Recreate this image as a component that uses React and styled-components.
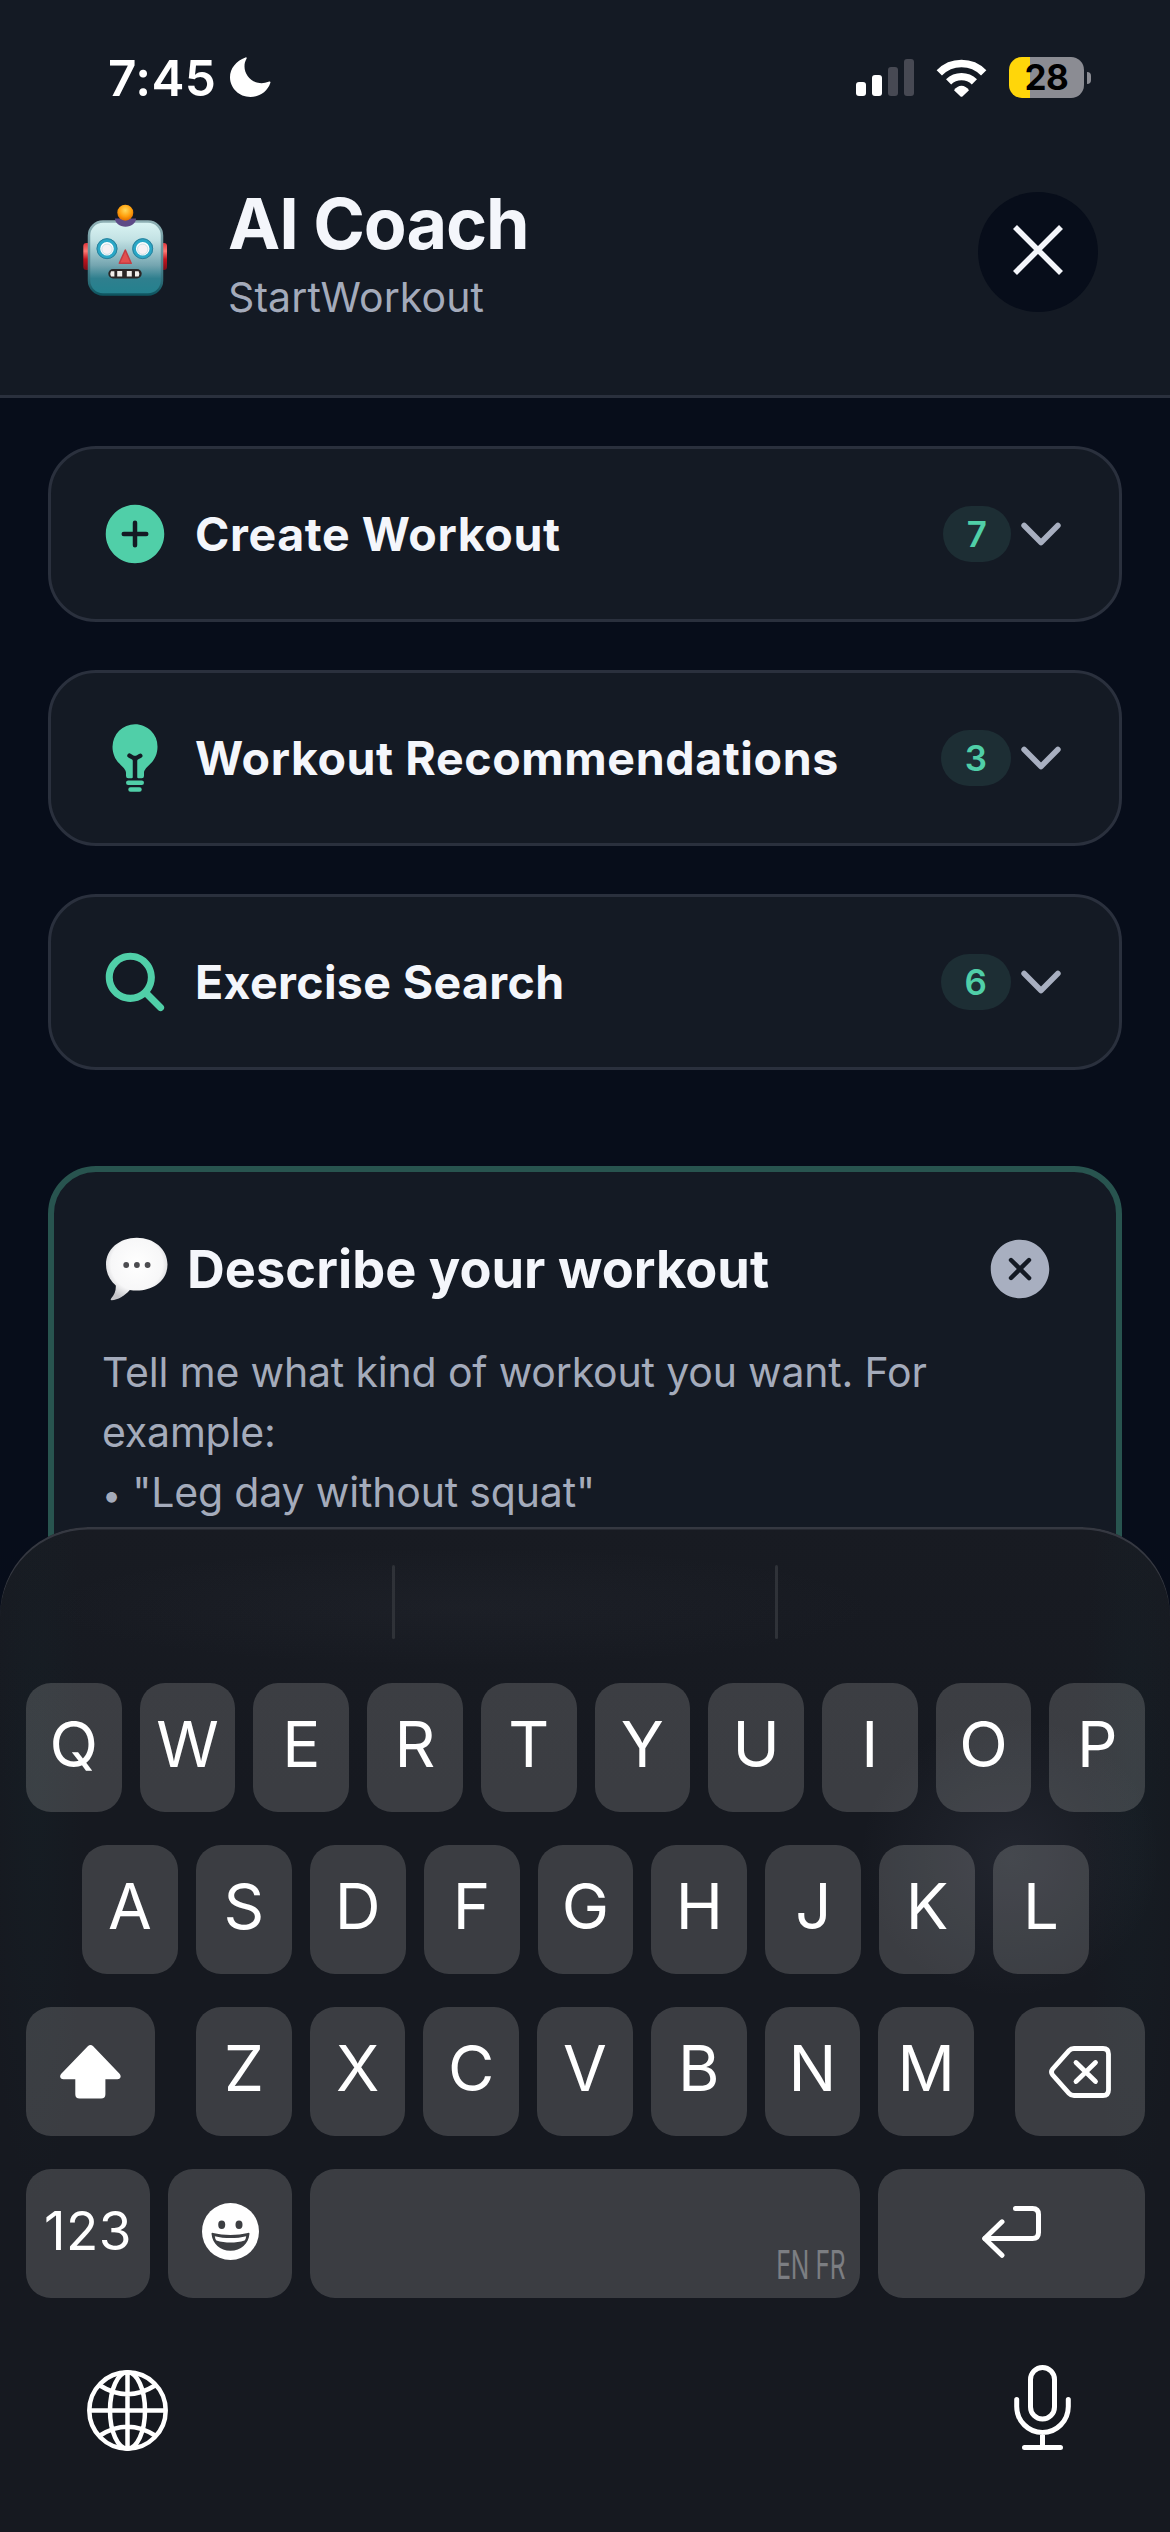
import React from "react";
import styled, { createGlobalStyle } from "styled-components";
import { IoAddCircle, IoBulb, IoSearch, IoChevronDown, IoCloseCircle } from "react-icons/io5";

const GlobalStyle = createGlobalStyle`
  * { box-sizing: border-box; }
  body { margin: 0; background: #070d1a; }
`;

const Screen = styled.div`
  position: relative;
  display: flex;
  flex-direction: column;
  width: 1170px;
  height: 2532px;
  overflow: hidden;
  background: #070d1a;
  color: #f4f6fb;
  font-family: Inter, "Liberation Sans", sans-serif;
  svg { display: block; flex: none; }
`;

const Header = styled.header`
  height: 398px;
  flex: none;
  background: #141a24;
  border-bottom: 3px solid #2a303d;
`;

const StatusBar = styled.div`
  display: flex;
  align-items: center;
  height: 155px;
  padding: 0 79px 0 108px;
`;

const Clock = styled.div`
  width: 122px;
  font-size: 49.5px;
  font-weight: 600;
  line-height: 60px;
  letter-spacing: 0.4px;
  color: #fff;
  white-space: nowrap;
`;

const StatusIcons = styled.div`
  display: flex;
  align-items: center;
  gap: 22px;
  margin-left: auto;
`;

const Battery = styled.div`
  display: flex;
  align-items: center;
  gap: 3px;
`;

const BatteryBody = styled.div`
  display: flex;
  align-items: center;
  justify-content: center;
  width: 75px;
  height: 41px;
  border-radius: 13px;
  background: linear-gradient(90deg, #ffd60a 0 28.5%, #8b8c93 28.5%);
  color: #000;
  font-size: 35px;
  font-weight: 700;
  letter-spacing: -0.5px;
  line-height: 41px;
`;

const BatteryNub = styled.div`
  width: 4px;
  height: 12px;
  border-radius: 0 4px 4px 0;
  background: #8b8c93;
`;

const HeaderRow = styled.div`
  display: flex;
  align-items: center;
  height: 120px;
  margin-top: 37px;
  padding: 0 72px 0 83px;
`;

const Avatar = styled.div`
  padding-bottom: 5px;
`;

const Heading = styled.div`
  flex: 1;
  margin-left: 61px;
  padding-top: 2px;
`;

const Title = styled.h1`
  margin: 0;
  font-size: 70px;
  font-weight: 700;
  line-height: 88px;
  letter-spacing: -1.1px;
`;

const Subtitle = styled.div`
  font-size: 41px;
  line-height: 59px;
  letter-spacing: 0.1px;
  color: #a4abbb;
`;

const CloseButton = styled.button`
  display: flex;
  align-items: center;
  justify-content: center;
  width: 120px;
  height: 120px;
  padding: 0 1px 4px 0;
  border: 0;
  border-radius: 50%;
  background: #070d1a;
`;

const Content = styled.main`
  display: flex;
  flex-direction: column;
  gap: 48px;
  padding: 48px;
`;

const Section = styled.section`
  display: flex;
  align-items: center;
  flex: none;
  height: 176px;
  padding: 0 48px;
  border: 3px solid #2a303d;
  border-radius: 48px;
  background: #141a24;
`;

const SectionTitle = styled.h2`
  flex: 1;
  margin: 0 0 0 24px;
  font-size: 46.5px;
  font-weight: 650;
  line-height: 60px;
  letter-spacing: ${(p) => p.$track}px;
  white-space: nowrap;
`;

const Badge = styled.span`
  height: 56px;
  padding: 0 24px;
  border-radius: 30px;
  background: #1d2e34;
  color: #50cfa8;
  font-size: 35px;
  font-weight: 600;
  line-height: 56px;
`;

const Describe = styled.section`
  flex: none;
  height: 620px;
  margin-top: 48px;
  padding: 61px 60px 48px 48px;
  border: 6px solid #28544f;
  border-radius: 48px;
  background: #141a24;
`;

const DescribeHead = styled.div`
  display: flex;
  align-items: center;
  height: 72px;
  padding-left: 3px;
`;

const DescribeTitle = styled.h2`
  flex: 1;
  margin: 0 0 0 19px;
  font-size: 52.3px;
  font-weight: 700;
  line-height: 72px;
  letter-spacing: 0.05px;
  white-space: nowrap;
`;

const DescribeText = styled.p`
  margin: 37px 0 0;
  font-size: 41px;
  line-height: 60px;
  letter-spacing: -0.17px;
  color: #a4abbb;
  white-space: pre-line;
`;

const Bullet = styled.span`
  font-size: 34px;
  line-height: 1;
`;

const Keyboard = styled.div`
  position: absolute;
  top: 1527px;
  right: 0;
  bottom: 0;
  left: 0;
  border-radius: 88px 88px 0 0;
  box-shadow: inset 0 2.5px 0 #353841;
  background:
    radial-gradient(ellipse 150px 140px at 1010px 330px, rgba(120, 125, 150, 0.12), transparent),
    radial-gradient(ellipse 420px 60px at 460px 80px, rgba(120, 125, 140, 0.05), transparent),
    radial-gradient(ellipse 50px 420px at 36px 260px, rgba(20, 50, 54, 0.14), transparent),
    radial-gradient(ellipse 50px 420px at 1134px 260px, rgba(20, 50, 54, 0.14), transparent),
    linear-gradient(#181b22, #161920 260px);
`;

const Suggestions = styled.div`
  display: flex;
  align-items: center;
  height: 156px;
  padding: 0 13px 6px;
`;

const Suggestion = styled.div`
  flex: 1;
`;

const Divider = styled.div`
  width: 3px;
  height: 74px;
  border-radius: 2px;
  background: #2f3238;
`;

const Rows = styled.div`
  display: flex;
  flex-direction: column;
  gap: 33px;
  padding: 0 25px 0 26px;
`;

const KeyRow = styled.div`
  display: flex;
  gap: ${(p) => p.$gap || 18}px;
  padding: 0 ${(p) => p.$inset || 0}px;
`;

const Letters = styled.div`
  display: flex;
  flex: 1;
  gap: 18px;
`;

const Key = styled.div`
  display: flex;
  align-items: center;
  justify-content: center;
  flex: ${(p) => (p.$width ? `0 0 ${p.$width}px` : "1 1 0")};
  min-width: 0;
  height: 129px;
  padding-bottom: ${(p) => p.$lift || 0}px;
  border-radius: 25px;
  background: rgba(255, 255, 246, 0.162);
  color: #fff;
  font-size: ${(p) => p.$size || 63.5}px;
  font-weight: 440;
  line-height: 1;
  letter-spacing: ${(p) => p.$track || 0}px;
`;

const SpaceKey = styled(Key)`
  align-items: flex-end;
  justify-content: flex-end;
  padding: 0 15px 11px;
`;

const Languages = styled.span`
  font-size: 40px;
  font-weight: 400;
  line-height: 44px;
  letter-spacing: -0.5px;
  color: #7c7e82;
  transform: scaleX(0.615);
  transform-origin: right center;
  white-space: nowrap;
`;

const KeyboardFooter = styled.div`
  display: flex;
  align-items: center;
  justify-content: space-between;
  height: 222px;
  padding: 0 99px 0 87px;
`;

const Moon = () => (
  <svg width="41" height="41" viewBox="0 0 41 41" fill="#fff">
    <path d="M15.5.5C6 4 0 11.5 0 20.3 0 31 9 40 20.5 40c9 0 17-5.5 19.8-14 .7-1.400-.5-1.800-1.800-1.200-3.500 1.500-7.500 1.700-10.500 1C20 24 14.500 17 14.500 9.500c0-3 .5-5 2-7.700C17 .6 16.500 0 15.500.5Z" />
  </svg>
);

const Signal = () => (
  <svg width="58" height="37" viewBox="0 0 58 37">
    <rect x="0" y="23" width="10" height="14" rx="3" fill="#fff" />
    <rect x="16" y="16" width="10" height="21" rx="3" fill="#fff" />
    <rect x="32" y="8" width="10" height="29" rx="3" fill="#474953" />
    <rect x="48" y="0" width="10" height="37" rx="3" fill="#474953" />
  </svg>
);

const Wifi = () => (
  <svg width="51" height="38" viewBox="0 0 51 38" fill="none" stroke="#fff" strokeWidth="7.400">
    <path d="M3.300 13.800A31 31 0 0 1 47.700 13.800" />
    <path d="M12.600 22.900A18.500 18.500 0 0 1 38.400 22.900" />
    <path d="M18 31.200c4-6 11-6 15 0l-6.300 6.100q-1.200 1-2.400 0Z" fill="#fff" stroke="none" />
  </svg>
);

const Robot = () => (
  <svg width="84" height="92" viewBox="0 0 84 92">
    <defs>
      <linearGradient id="face" x1="0" y1="0" x2="0" y2="1">
        <stop offset="0" stopColor="#dcf5f4" />
        <stop offset="0.25" stopColor="#c3e2e4" />
        <stop offset="0.6" stopColor="#74a5b0" />
        <stop offset="0.78" stopColor="#2f7f8e" />
        <stop offset="1" stopColor="#23818e" />
      </linearGradient>
      <linearGradient id="rim" x1="0" y1="0" x2="0" y2="1">
        <stop offset="0" stopColor="#8fb0b4" />
        <stop offset="0.6" stopColor="#4f8590" />
        <stop offset="1" stopColor="#0f5560" />
      </linearGradient>
      <linearGradient id="ear" x1="0" y1="0" x2="0" y2="1">
        <stop offset="0" stopColor="#e0343a" />
        <stop offset="0.3" stopColor="#ff7a74" />
        <stop offset="0.6" stopColor="#c3131d" />
        <stop offset="1" stopColor="#7a0d18" />
      </linearGradient>
      <radialGradient id="bulb" cx="0.5" cy="0.35" r="0.65">
        <stop offset="0" stopColor="#ffd95a" />
        <stop offset="0.6" stopColor="#ff9f0c" />
        <stop offset="1" stopColor="#e06d00" />
      </radialGradient>
    </defs>
    <rect x="0.300" y="39" width="8" height="27" rx="3" fill="url(#ear)" />
    <rect x="76" y="39" width="8" height="27" rx="3" fill="url(#ear)" />
    <rect x="6" y="17.500" width="73" height="73" rx="14" fill="url(#face)" stroke="url(#rim)" strokeWidth="2.500" />
    <path d="M32 14.500h21c0 4.500-4.500 8.200-10.500 8.200S32 19 32 14.500Z" fill="#5d4a86" />
    <circle cx="42.300" cy="8.700" r="8" fill="url(#bulb)" />
    {[24, 59.700].map((x) => (
      <g key={x}>
        <circle cx={x} cy="44.700" r="8.600" fill="#fff" stroke="#2aa7c6" strokeWidth="3.600" />
        <circle cx={x} cy="44.700" r="10" fill="none" stroke="#2c7f99" strokeWidth="1" />
        <circle cx={x} cy="45.200" r="5.200" fill="#f6f1f4" stroke="#c9dfe6" strokeWidth="1" />
      </g>
    ))}
    <path d="M42.300 46 48.200 59.300H36.300Z" fill="#e2504f" stroke="#c43c42" strokeWidth="1.500" strokeLinejoin="round" />
    <rect x="25.300" y="65" width="33.400" height="9.500" rx="4.700" fill="#2b2626" />
    <path d="M28 67.200h3.400v5.200H28q-1.500-2.600 0-5.200ZM34.200 67h5v5.600h-5ZM43.800 67h5v5.600h-5ZM52 67.200h3.600q1.500 2.600 0 5.200H52Z" fill="#f2efec" />
  </svg>
);

const Bubble = () => (
  <svg width="63" height="64" viewBox="0 0 63 64">
    <defs>
      <radialGradient id="speech" cx="0.5" cy="0.42" r="0.6">
        <stop offset="0" stopColor="#fff" />
        <stop offset="0.7" stopColor="#f7f7f8" />
        <stop offset="1" stopColor="#c4c4c8" />
      </radialGradient>
    </defs>
    <path
      d="M31.800.7C49 .7 62.500 12 62.500 27.500S49 53.500 31.800 53.500c-2.500 0-4.800-.2-7-.6C19.500 59 13 62.600 6.600 63.200c-1 0-1.200-.9-.5-1.600 3.400-3.600 5-8 4.700-13.200C4.700 43.500 1 36 1 27.500 1 12 14.500.7 31.800.7Z"
      fill="url(#speech)"
    />
    {[21.200, 31.900, 42.600].map((x) => (
      <circle key={x} cx={x} cy="28" r="2.900" fill="#4c4c50" />
    ))}
  </svg>
);

const Cross = () => (
  <svg width="50" height="50" viewBox="0 0 50 50" stroke="#f4f6fb" strokeWidth="5.600">
    <path d="M2 2 48 48M48 2 2 48" />
  </svg>
);

const ShiftIcon = () => (
  <svg width="61" height="54" viewBox="0 0 61 54" fill="#fff">
    <path d="M27.800 1.200q2.700-2.400 5.400 0L59.300 28.500c2.600 2.700 1.200 5.700-2 5.700H45.400v15q0 4.300-4.300 4.300H19.600q-4.300 0-4.300-4.300v-15H3.500c-3.200 0-4.600-3-2-5.700Z" />
  </svg>
);

const DeleteIcon = () => (
  <svg width="62" height="52" viewBox="0 0 62 52" fill="none" stroke="#fff" strokeWidth="4.800" strokeLinecap="round" strokeLinejoin="round">
    <path d="M25 2.500H54q5.500 0 5.500 5.500V44q0 5.500-5.500 5.500H25q-3 0-5-2.200L3.700 29q-2.400-3 0-6L20 4.700q2-2.200 5-2.200Z" />
    <path d="M27 16.500 46.500 35.500M46.500 16.500 27 35.500" />
  </svg>
);

const ReturnIcon = () => (
  <svg width="59" height="52" viewBox="0 0 59 52" fill="none" stroke="#fff" strokeWidth="5" strokeLinecap="round" strokeLinejoin="round">
    <path d="M33.500 2.600H50.500q6 0 6 6V26.500q0 6-6 6H3" />
    <path d="M20 15.800 2.700 32.500 20 49.300" />
  </svg>
);

const Smile = () => (
  <svg width="57" height="57" viewBox="0 0 57 57">
    <circle cx="28.500" cy="28.500" r="28.500" fill="#fff" />
    <g fill="#3c3e42">
      <ellipse cx="19.700" cy="21.800" rx="3.500" ry="4.200" />
      <ellipse cx="37" cy="21.800" rx="3.500" ry="4.200" />
      <path d="M9.500 30.800q0-1.300 1.600-.8c10.500 2.600 24.300 2.600 34.800 0q1.600-.5 1.600.8C46.500 41 39 47.800 28.500 47.800S10.500 41 9.500 30.800Z" />
    </g>
    <path d="M12.800 33.200c9.500 2.500 22 2.500 31.400 0q-.2 2.600-1.600 4.200c-9 2.700-19.200 2.700-28.200 0q-1.400-1.600-1.600-4.200Z" fill="#fff" />
  </svg>
);

const Globe = () => (
  <svg width="81" height="85" viewBox="0 -3 81 85" fill="none" stroke="#fff" strokeWidth="4.500">
    <circle cx="40.500" cy="40.500" r="38.200" />
    <ellipse cx="40.500" cy="40.500" rx="17.500" ry="38.200" />
    <path d="M40.500 2V79M2 40.500H79M13 15.500Q40.500 33 68 15.500M13 65.500Q40.500 48 68 65.500" />
  </svg>
);

const Mic = () => (
  <svg width="57" height="88" viewBox="0 0 57 88" fill="none" stroke="#fff" strokeWidth="5" strokeLinecap="round">
    <rect x="16.500" y="2.500" width="24" height="51.500" rx="12" />
    <path d="M2.700 34.500V41.500a25.800 26 0 0 0 51.600 0V34.500M28.500 67.500V82M10.500 82.500H46.500" />
  </svg>
);

const sections = [
  { icon: IoAddCircle, title: "Create Workout", count: 7, track: 0.6 },
  { icon: IoBulb, title: "Workout Recommendations", count: 3, track: 0.6 },
  { icon: IoSearch, title: "Exercise Search", count: 6, track: 0.35 },
];

const letterKeys = (letters) =>
  letters.split("").map((letter) => (
    <Key key={letter} $lift={7}>
      {letter}
    </Key>
  ));

export default function App() {
  return (
    <Screen>
      <GlobalStyle />
      <Header>
        <StatusBar>
          <Clock>7:45</Clock>
          <Moon />
          <StatusIcons>
            <Signal />
            <Wifi />
            <Battery>
              <BatteryBody>28</BatteryBody>
              <BatteryNub />
            </Battery>
          </StatusIcons>
        </StatusBar>
        <HeaderRow>
          <Avatar>
            <Robot />
          </Avatar>
          <Heading>
            <Title>AI Coach</Title>
            <Subtitle>StartWorkout</Subtitle>
          </Heading>
          <CloseButton aria-label="Close">
            <Cross />
          </CloseButton>
        </HeaderRow>
      </Header>

      <Content>
        {sections.map(({ icon: Icon, title, count, track }) => (
          <Section key={title}>
            <Icon size={72} color="#50cfa8" />
            <SectionTitle $track={track}>{title}</SectionTitle>
            <Badge>{count}</Badge>
            <IoChevronDown size={60} color="#a8afc0" />
          </Section>
        ))}

        <Describe>
          <DescribeHead>
            <Bubble />
            <DescribeTitle>Describe your workout</DescribeTitle>
            <IoCloseCircle size={72} color="#a8afc0" />
          </DescribeHead>
          <DescribeText>
            {"Tell me what kind of workout you want. For example:\n"}
            <Bullet>•</Bullet>
            {' "Leg day without squat"'}
          </DescribeText>
        </Describe>
      </Content>

      <Keyboard>
        <Suggestions>
          <Suggestion />
          <Divider />
          <Suggestion />
          <Divider />
          <Suggestion />
        </Suggestions>
        <Rows>
          <KeyRow>{letterKeys("QWERTYUIOP")}</KeyRow>
          <KeyRow $inset={56}>{letterKeys("ASDFGHJKL")}</KeyRow>
          <KeyRow $gap={41}>
            <Key $width={129}>
              <ShiftIcon />
            </Key>
            <Letters>{letterKeys("ZXCVBNM")}</Letters>
            <Key $width={130}>
              <DeleteIcon />
            </Key>
          </KeyRow>
          <KeyRow>
            <Key $width={124} $size={53} $lift={5} $track={0.4}>
              123
            </Key>
            <Key $width={124} $lift={4}>
              <Smile />
            </Key>
            <SpaceKey>
              <Languages>EN FR</Languages>
            </SpaceKey>
            <Key $width={267} $lift={3}>
              <ReturnIcon />
            </Key>
          </KeyRow>
        </Rows>
        <KeyboardFooter>
          <Globe />
          <Mic />
        </KeyboardFooter>
      </Keyboard>
    </Screen>
  );
}
